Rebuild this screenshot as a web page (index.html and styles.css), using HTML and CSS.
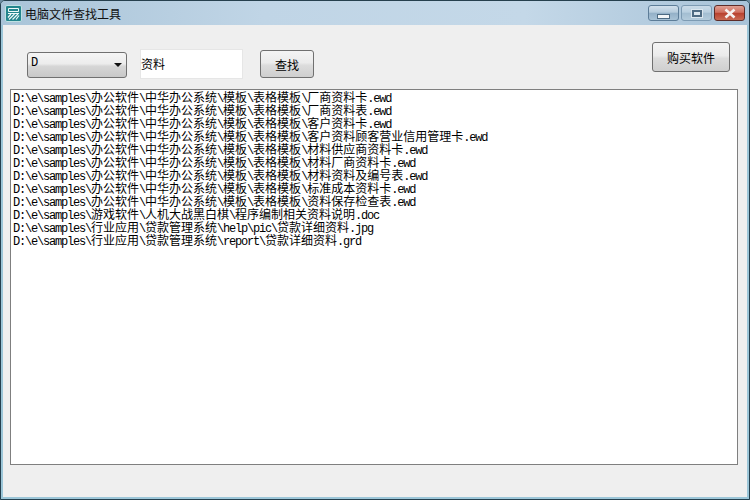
FILE: index.html
```html
<!DOCTYPE html>
<html lang="zh-CN">
<head>
<meta charset="utf-8">
<title>电脑文件查找工具</title>
<link rel="stylesheet" href="styles.css">
</head>
<body>
<div class="window">
  <header class="titlebar">
    <svg class="app-icon" width="17" height="17" viewBox="0 0 17 17">
      <rect x="0.5" y="0.5" width="16" height="16" rx="1.5" fill="#23858c" stroke="#bfe0e2"/>
      <path d="M3.5 3.5h10v3h-10zM3 8.5h11" fill="none" stroke="#eef9f9" stroke-width="1"/>
      <path d="M6 9l-3 3.5M9.5 9l-5.5 5.5M13 9l-5.5 5.5M14 10.5l-3 4" fill="none" stroke="#eef9f9" stroke-width="1.2"/>
    </svg>
    <span class="title">电脑文件查找工具</span>
    <div class="caption-buttons">
      <div class="cap cap-min"><span class="min-glyph"></span></div>
      <div class="cap cap-max"><span class="max-glyph"></span></div>
      <div class="cap cap-close">
        <svg width="16" height="11" viewBox="0 0 16 11"><path d="M3.5 1.5l9 8M12.5 1.5l-9 8" stroke="#f5f1f0" stroke-width="2.6" fill="none"/></svg>
      </div>
    </div>
  </header>
  <main class="client">
    <div class="toolbar">
      <div class="select"><span>D</span><i class="arrow"></i></div>
      <div class="search-box">资料</div>
      <button class="btn btn-find">查找</button>
      <button class="btn btn-buy">购买软件</button>
    </div>
    <div class="results">
      <div class="row">D:\e\samples\<span class="zh">办公软件</span>\<span class="zh">中华办公系统</span>\<span class="zh">模板</span>\<span class="zh">表格模板</span>\<span class="zh">厂商资料卡</span>.ewd</div>
      <div class="row">D:\e\samples\<span class="zh">办公软件</span>\<span class="zh">中华办公系统</span>\<span class="zh">模板</span>\<span class="zh">表格模板</span>\<span class="zh">厂商资料表</span>.ewd</div>
      <div class="row">D:\e\samples\<span class="zh">办公软件</span>\<span class="zh">中华办公系统</span>\<span class="zh">模板</span>\<span class="zh">表格模板</span>\<span class="zh">客户资料卡</span>.ewd</div>
      <div class="row">D:\e\samples\<span class="zh">办公软件</span>\<span class="zh">中华办公系统</span>\<span class="zh">模板</span>\<span class="zh">表格模板</span>\<span class="zh">客户资料顾客营业信用管理卡</span>.ewd</div>
      <div class="row">D:\e\samples\<span class="zh">办公软件</span>\<span class="zh">中华办公系统</span>\<span class="zh">模板</span>\<span class="zh">表格模板</span>\<span class="zh">材料供应商资料卡</span>.ewd</div>
      <div class="row">D:\e\samples\<span class="zh">办公软件</span>\<span class="zh">中华办公系统</span>\<span class="zh">模板</span>\<span class="zh">表格模板</span>\<span class="zh">材料厂商资料卡</span>.ewd</div>
      <div class="row">D:\e\samples\<span class="zh">办公软件</span>\<span class="zh">中华办公系统</span>\<span class="zh">模板</span>\<span class="zh">表格模板</span>\<span class="zh">材料资料及编号表</span>.ewd</div>
      <div class="row">D:\e\samples\<span class="zh">办公软件</span>\<span class="zh">中华办公系统</span>\<span class="zh">模板</span>\<span class="zh">表格模板</span>\<span class="zh">标准成本资料卡</span>.ewd</div>
      <div class="row">D:\e\samples\<span class="zh">办公软件</span>\<span class="zh">中华办公系统</span>\<span class="zh">模板</span>\<span class="zh">表格模板</span>\<span class="zh">资料保存检查表</span>.ewd</div>
      <div class="row">D:\e\samples\<span class="zh">游戏软件</span>\<span class="zh">人机大战黑白棋</span>\<span class="zh">程序编制相关资料说明</span>.doc</div>
      <div class="row">D:\e\samples\<span class="zh">行业应用</span>\<span class="zh">贷款管理系统</span>\help\pic\<span class="zh">贷款详细资料</span>.jpg</div>
      <div class="row">D:\e\samples\<span class="zh">行业应用</span>\<span class="zh">贷款管理系统</span>\report\<span class="zh">贷款详细资料</span>.grd</div>
    </div>
  </main>
</div>
</body>
</html>
```
FILE: styles.css
```css
html, body {
  margin: 0;
  padding: 0;
  background: #6f8ea3;
}
.window {
  width: 750px;
  height: 500px;
  box-sizing: border-box;
  display: flex;
  flex-direction: column;
  border: 1px solid #26404e;
  border-radius: 5px 5px 0 0;
  background: #9cc6d8;
  font-family: "Noto Sans CJK SC", sans-serif;
  overflow: hidden;
}
.titlebar {
  height: 24px;
  flex: none;
  display: flex;
  align-items: center;
  padding: 0 4px;
  background: linear-gradient(90deg, #a9c4d8 0, #c0d5e6 35%, #c4d8e8 70%, #a8c3d8 100%);
}
.app-icon {
  flex: none;
}
.title {
  margin-left: 3px;
  font-size: 12px;
  color: #101010;
}
.caption-buttons {
  margin-left: auto;
  display: flex;
  gap: 2px;
  align-self: flex-start;
  margin-top: 4px;
}
.cap {
  height: 16px;
  box-sizing: border-box;
  border: 1px solid #5d7d98;
  border-radius: 3px;
  display: flex;
  align-items: center;
  justify-content: center;
  background: linear-gradient(180deg, #d2e0ec 0, #b5cbdc 45%, #93b0c7 50%, #a8c2d6 100%);
}
.cap-min, .cap-max {
  width: 31px;
}
.cap-max {
  background: linear-gradient(180deg, #cadbe8 0, #b8cfe0 45%, #a2bdd1 50%, #b3cbdc 100%);
  border-color: #7d9bb3;
}
.cap-close {
  width: 31px;
  border-color: #5e2c28;
  background: linear-gradient(180deg, #e0a093 0, #cf6f5f 45%, #b8412f 52%, #c96a54 100%);
}
.min-glyph {
  width: 11px;
  height: 3px;
  margin-top: 6px;
  background: #f3f6f8;
  border: 1px solid #4d6a82;
}
.max-glyph {
  width: 6px;
  height: 3px;
  border: 2px solid #4d6a82;
  background: #dbe6ee;
  box-shadow: 0 0 0 1px #dce7ef;
}
.client {
  flex: 1;
  margin: 0 2px 2px;
  background: #efefef;
  display: flex;
  flex-direction: column;
}
.toolbar {
  height: 64px;
  flex: none;
  display: flex;
  align-items: flex-start;
  padding-left: 24px;
  padding-right: 17px;
}
.select {
  width: 100px;
  height: 26px;
  margin-top: 27px;
  box-sizing: border-box;
  border: 1px solid #707070;
  border-radius: 3px;
  background: linear-gradient(180deg, #f5f5f5 0, #ececec 45%, #d6d6d6 55%, #c8c8c8 100%);
  display: flex;
  align-items: center;
  justify-content: space-between;
  padding: 0 4px 4px 3px;
  font-family: "Liberation Mono", monospace;
  font-size: 12px;
  color: #000;
}
.arrow {
  width: 0;
  height: 0;
  margin-top: 4px;
  border-left: 4px solid transparent;
  border-right: 4px solid transparent;
  border-top: 4px solid #111;
}
.search-box {
  width: 103px;
  height: 30px;
  margin: 24px 0 0 13px;
  box-sizing: border-box;
  background: #fff;
  border: 1px solid #e6e6e6;
  font-size: 12px;
  line-height: 28px;
  color: #000;
}
.btn {
  box-sizing: border-box;
  border: 1px solid #707070;
  border-radius: 3px;
  background: linear-gradient(180deg, #f4f4f4 0, #ebebeb 45%, #dcdcdc 55%, #cfcfcf 100%);
  font-family: "Noto Sans CJK SC", sans-serif;
  font-size: 12px;
  color: #000;
  padding: 0;
}
.btn-find {
  width: 54px;
  height: 28px;
  margin: 25px 0 0 17px;
}
.btn-buy {
  width: 78px;
  height: 30px;
  margin: 17px 0 0 auto;
}
.results {
  height: 376px;
  margin: 0 9px 0 7px;
  box-sizing: border-box;
  background: #fff;
  border: 1px solid #7f7f7f;
  padding: 1px 0 0 2px;
}
.row {
  height: 13px;
  font-family: "Liberation Mono", monospace;
  font-size: 12px;
  letter-spacing: -1.2px;
  line-height: 11px;
  color: #000;
  white-space: nowrap;
}
.zh {
  font-family: "Noto Sans CJK SC", sans-serif;
  letter-spacing: 0;
}
```
